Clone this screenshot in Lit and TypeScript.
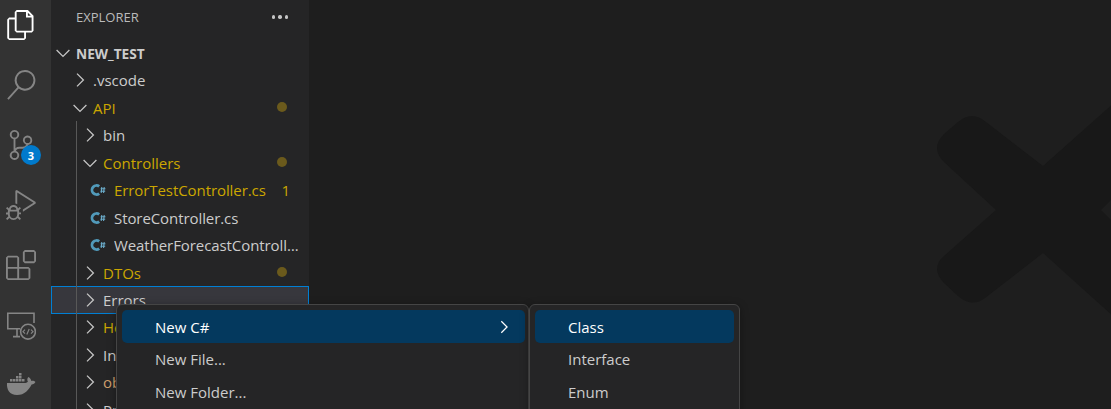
import { LitElement, html, css, svg } from "lit";
import { customElement } from "lit/decorators.js";

const ICONS = [
  "M17.5 0h-9L7 1.5V6H2.5L1 7.5v15.07L2.5 24h12.07L16 22.57V18h4.7l1.3-1.43V4.5L17.5 0zm0 2.12l2.38 2.38H17.5V2.12zm-3 20.38h-12v-15H7v9.07L8.5 18h6v4.5zm6-6h-12v-15H16V6h4.5v10.5z",
  "M15.25 0a8.25 8.25 0 0 0-6.18 13.72L1 22.88l1.12 1 8.05-9.12A8.251 8.251 0 1 0 15.25.01V0zm0 15a6.75 6.75 0 1 1 0-13.5 6.75 6.75 0 0 1 0 13.5z",
  "M21.007 8.222A3.738 3.738 0 0 0 15.045 5.2a3.737 3.737 0 0 0 1.156 6.583 2.988 2.988 0 0 1-2.668 1.67h-2.99a4.456 4.456 0 0 0-2.989 1.165V7.4a3.737 3.737 0 1 0-1.494 0v9.117a3.776 3.776 0 1 0 1.816.099 2.99 2.99 0 0 1 2.668-1.667h2.99a4.484 4.484 0 0 0 4.223-3.039 3.736 3.736 0 0 0 3.25-3.687zM4.565 3.738a2.242 2.242 0 1 1 4.484 0 2.242 2.242 0 0 1-4.484 0zm4.484 16.441a2.242 2.242 0 1 1-4.484 0 2.242 2.242 0 0 1 4.484 0zm8.221-9.715a2.242 2.242 0 1 1 0-4.485 2.242 2.242 0 0 1 0 4.485z",
  "M10.94 13.5l-1.32 1.32a3.73 3.73 0 0 0-7.24 0L1.06 13.5 0 14.56l1.72 1.72-.22.22V18H0v1.5h1.5v.08c.077.489.214.966.41 1.42L0 22.94 1.06 24l1.65-1.65A4.308 4.308 0 0 0 6 24a4.31 4.31 0 0 0 3.29-1.65L10.94 24 12 22.94 10.09 21c.198-.464.336-.951.41-1.45v-.1H12V18h-1.5v-1.5l-.22-.22L12 14.56l-1.06-1.06zM6 13.5a2.25 2.25 0 0 1 2.25 2.25h-4.5A2.25 2.25 0 0 1 6 13.5zm3 6a3.33 3.33 0 0 1-3 3 3.33 3.33 0 0 1-3-3v-2.25h6v2.25zm14.76-9.9v1.26L13.5 17.37v-1.8l8.5-5.37L9 2v9.46a5.07 5.07 0 0 0-1.5-.72V.63L8.64 0l15.12 9.6z",
  "M13.5 1.5L15 0h7.5L24 1.5V9l-1.5 1.5H15L13.5 9V1.5zm1.5 0V9h7.5V1.5H15zM0 15V6l1.5-1.5H9L10.5 6v7.5H18l1.5 1.5v7.5L18 24H1.5L0 22.5V15zm9-1.5V6H1.5v7.5H9zM9 15H1.5v7.5H9V15zm1.5 7.5H18V15h-7.5v7.5z",
];

type Row = { label: string; depth: number; kind: "open" | "closed" | "cs"; mod?: boolean; tan?: boolean; dot?: boolean; badge?: string; bold?: boolean; sel?: boolean };

const ROWS: Row[] = [
  { label: "NEW_TEST", depth: 0, kind: "open", bold: true },
  { label: ".vscode", depth: 1, kind: "closed" },
  { label: "API", depth: 1, kind: "open", mod: true, dot: true },
  { label: "bin", depth: 2, kind: "closed" },
  { label: "Controllers", depth: 2, kind: "open", mod: true, dot: true },
  { label: "ErrorTestController.cs", depth: 3, kind: "cs", mod: true, badge: "1" },
  { label: "StoreController.cs", depth: 3, kind: "cs" },
  { label: "WeatherForecastController.cs", depth: 3, kind: "cs" },
  { label: "DTOs", depth: 2, kind: "closed", mod: true, dot: true },
  { label: "Errors", depth: 2, kind: "closed", sel: true },
  { label: "Helpers", depth: 2, kind: "closed", mod: true },
  { label: "Interfaces", depth: 2, kind: "closed" },
  { label: "obj", depth: 2, kind: "closed", tan: true },
  { label: "Properties", depth: 2, kind: "closed" },
];

const chevron = (open: boolean) => html`<svg class="chev" viewBox="0 0 20 20" fill="none" stroke="currentColor" stroke-width="1.3">
  ${open ? svg`<path d="M3.6 7 10 13.4 16.4 7"/>` : svg`<path d="M7 3.6 13.4 10 7 16.4"/>`}
</svg>`;

@customElement("app-root")
export class AppRoot extends LitElement {
  static styles = css`
    :host { display: block; height: 409px; overflow: hidden; position: relative; font-family: "Open Sans", "Noto Sans", sans-serif; }
    .app { display: flex; height: 409px; background: #1e1e1e; }
    .activity { width: 51px; flex: none; background: #333333; overflow: hidden; }
    .acts { width: 42px; margin-top: -5px; display: flex; flex-direction: column; }
    .act { height: 60px; display: flex; align-items: center; justify-content: center; position: relative; color: #858585; }
    .act.on { color: #ffffff; }
    .act svg { width: 30px; height: 30px; display: block; }
    .badge { position: absolute; left: 21px; top: 30px; width: 20px; height: 20px; border-radius: 50%; background: #007acc; color: #fff; font-size: 11px; font-weight: 700; display: flex; align-items: center; justify-content: center; }
    .side { width: 258px; flex: none; background: #252526; position: relative; overflow: hidden; }
    .title { height: 34px; display: flex; align-items: center; justify-content: space-between; padding: 0 21px 0 25px; color: #bbbbbb; font-size: 13px; box-sizing: border-box; }
    .dots { display: flex; gap: 3px; }
    .dots i { width: 3.4px; height: 3.4px; border-radius: 50%; background: #c5c5c5; display: block; }
    .tree { display: flex; flex-direction: column; margin-top: 5.3px; }
    .row { height: 27.45px; flex: none; display: flex; align-items: center; color: #cccccc; font-size: 15px; position: relative; box-sizing: border-box; padding-right: 4px; }
    .row.mod { color: #cca700; }
    .row.tan { color: #cf9f6c; }
    .row.sel { background: #37373d; outline: 1px solid #007fd4; outline-offset: -1px; }
    .row.bold { font-weight: 700; font-size: 13.7px; }
    .chev { width: 20px; height: 20px; flex: none; color: #c5c5c5; margin-right: 3px; }
    .cs { width: 20px; flex: none; margin-right: 6px; display: flex; align-items: center; justify-content: center; }
    .cs svg { width: 16px; height: 16px; }
    .lbl { flex: 1; min-width: 0; white-space: nowrap; overflow: hidden; text-overflow: ellipsis; }
    .d0 { padding-left: 2px; }
    .d1 { padding-left: 19px; }
    .d2 { padding-left: 29px; }
    .d3 { padding-left: 37px; letter-spacing: -0.08px; }
    .dot { width: 10px; height: 10px; border-radius: 50%; background: #6b5a1c; flex: none; margin: 0 18px 0 8px; transform: translateY(-1px); }
    .num { flex: none; margin: 0 15px 0 8px; font-size: 15px; }
    .guide { position: absolute; left: 25px; top: 121px; bottom: 0; width: 1px; background: #585858; }
    .editor { flex: 1; position: relative; overflow: hidden; }
    .mark { position: absolute; left: 0; top: 0; width: 802px; height: 409px; display: block; }
    .menu { position: absolute; top: 304px; background: #252526; border: 1px solid #454545; border-radius: 6px; box-sizing: border-box; padding: 5.4px 5px 5px; height: 140px; box-shadow: 0 2px 8px rgba(0,0,0,.36); color: #cccccc; font-size: 15px; }
    .m1 { left: 116px; width: 413px; padding-right: 3px; }
    .m2 { left: 529px; width: 211px; }
    .item { height: 32.6px; display: flex; align-items: center; justify-content: space-between; border-radius: 5px; padding: 0 12px 0 33px; }
    .item.on { background: #04395e; color: #ffffff; }
    .item svg { width: 18px; height: 18px; display: block; }
  `;

  private row(r: Row) {
    return html`<div class="row d${r.depth} ${r.mod ? "mod" : ""} ${r.tan ? "tan" : ""} ${r.sel ? "sel" : ""} ${r.bold ? "bold" : ""}">
      ${r.kind === "cs"
        ? html`<span class="cs"><svg viewBox="0 0 16 16"><path fill="none" stroke="#519aba" stroke-width="2.8" d="M9.200 4.400A4.500 4.500 0 1 0 9.200 11.600"/><path fill="none" stroke="#6fb3d2" stroke-width="1" d="M11.800 5 11.200 11M14.200 5 13.600 11M10.600 6.800H15.400M10.400 9.200H15.200"/></svg></span>`
        : chevron(r.kind === "open")}
      <span class="lbl">${r.label}</span>
      ${r.dot ? html`<span class="dot"></span>` : ""}
      ${r.badge ? html`<span class="num">${r.badge}</span>` : ""}
    </div>`;
  }

  render() {
    return html`<div class="app">
      <nav class="activity"><div class="acts">
        ${ICONS.map((d, i) => html`<div class="act ${i === 0 ? "on" : ""}">
          <svg viewBox="0 0 24 24" fill="currentColor"><path fill-rule="evenodd" clip-rule="evenodd" d=${d}/></svg>
          ${i === 2 ? html`<span class="badge">3</span>` : ""}
        </div>`)}
        <div class="act"><svg viewBox="0 0 30 30" fill="none" stroke="currentColor" stroke-width="1.6">
          <path d="M14 18.800H1.800V3.200H28V13"/>
          <path d="M7 26.600h7M11 18.800v7.800"/>
          <circle cx="22" cy="21.700" r="7.400"/>
          <path d="M19 19.700 17 21.700l2 2M25 19.700l2 2-2 2M20.800 24.500l2.400-5.600" stroke-width="1.200"/>
        </svg></div>
        <div class="act"><svg viewBox="0 0 30 30" fill="currentColor">
          <path d="M10 6h2.500v2.500H10zM13 6h2.500v2.500H13zM13 3h2.500v2.500H13zM7 9h2.500v2.500H7zM10 9h2.500v2.500H10zM13 9h2.500v2.500H13zM16 9h2.500v2.500H16zM4 9h2.500v2.500H4z"/>
          <path d="M1 13h17.500c1.200 0 2.600-.2 3.400-1.200-.7-1.200-.8-2.800-.1-4l.7-.9 1 .9c1 .9 1.600 1.900 1.700 3.200 1-.3 2-.3 3.300.3.300.2.600.4.900.6-.6 1.400-2 2.300-3.800 2.500C22.900 19.500 18.800 25 11 25 3.500 25 .5 19.500 1 13z"/>
        </svg></div>
      </div></nav>
      <aside class="side">
        <div class="title"><span>EXPLORER</span><span class="dots"><i></i><i></i><i></i></span></div>
        <div class="tree">${ROWS.map((r) => this.row(r))}</div>
        <div class="guide"></div>
      </aside>
      <main class="editor">
        <svg class="mark" viewBox="309 0 802 409"><path fill="#181818" fill-rule="evenodd" d="M1043 166 L1135 84 L1190 210 L1135 336 L1043 253 L985 298 Q972 308 958 296 L944 283 Q930 268 944 256 L996 210 L944 162 Q930 148 944 134 L958 122 Q972 110 986 122 Z M1101 210 L1111 200 L1111 220 Z"/></svg>
      </main>
    </div>
    <div class="menu m1">
      <div class="item on"><span>New C#</span><svg viewBox="0 0 20 20" fill="none" stroke="currentColor" stroke-width="1.4"><path d="M7 3.600 13.400 10 7 16.400"/></svg></div>
      <div class="item"><span>New File...</span></div>
      <div class="item"><span>New Folder...</span></div>
    </div>
    <div class="menu m2">
      <div class="item on"><span>Class</span></div>
      <div class="item"><span>Interface</span></div>
      <div class="item"><span>Enum</span></div>
    </div>`;
  }
}
